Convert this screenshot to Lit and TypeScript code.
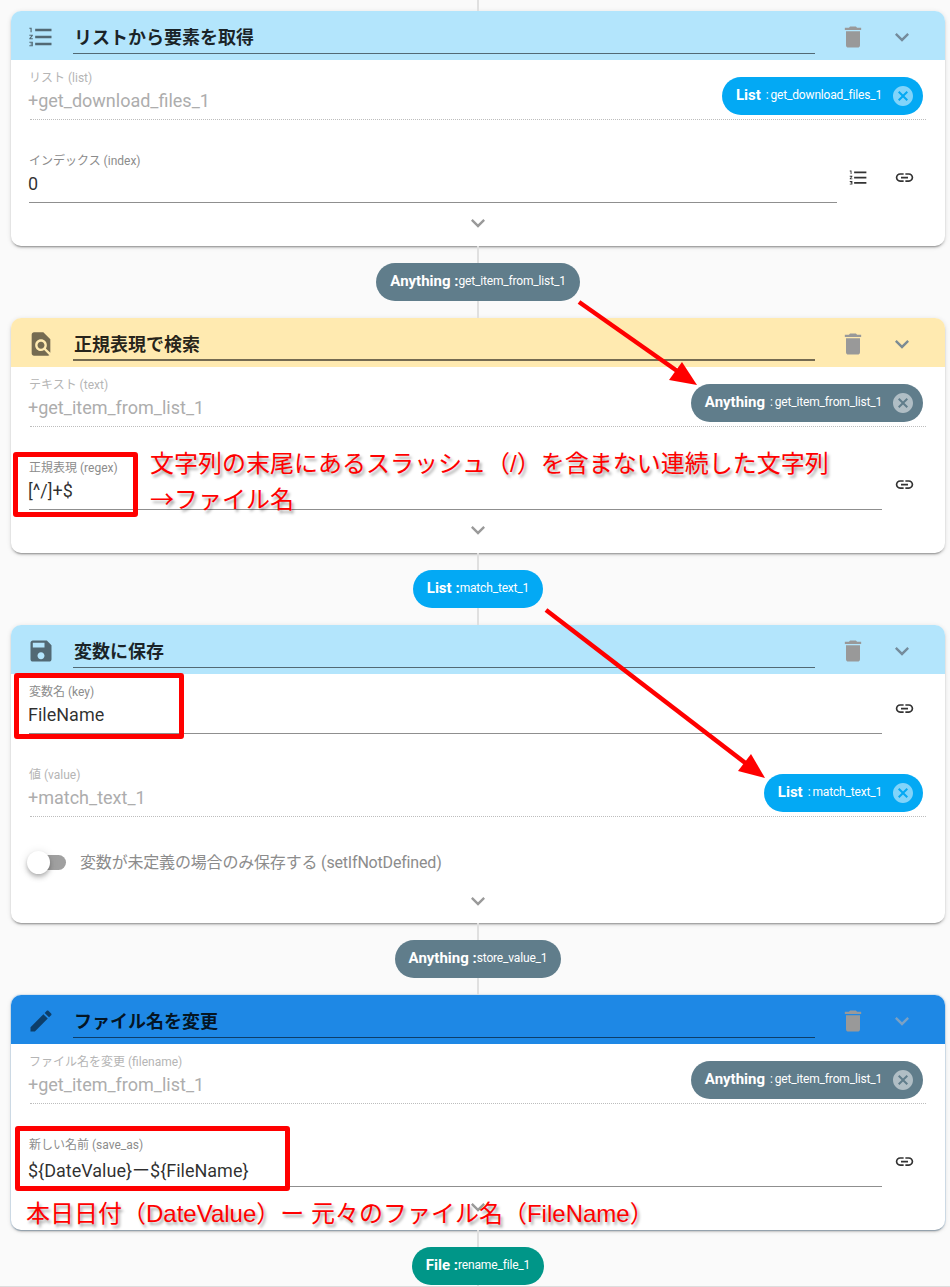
import { LitElement, html, css, svg } from "lit";
import { customElement } from "lit/decorators.js";
import { classMap } from "lit/directives/class-map.js";

const P = {
  list: "M2 17h2v.5H3v1h1v.5H2v1h3v-4H2v1zm1-9h1V4H2v1h1v3zm-1 3h1.8L2 13.1v.9h3v-1H3.2L5 10.9V10H2v1zm5-6v2h14V5H7zm0 14h14v-2H7v2zm0-6h14v-2H7v2z",
  find: "M20 19.59V8l-6-6H6c-1.1 0-1.99.9-1.99 2L4 20c0 1.1.89 2 1.99 2H18c.45 0 .85-.15 1.19-.4l-4.43-4.43c-.8.52-1.74.83-2.76.83-2.76 0-5-2.24-5-5s2.24-5 5-5 5 2.24 5 5c0 1.02-.31 1.96-.83 2.75L20 19.59zM9 13c0 1.66 1.34 3 3 3s3-1.34 3-3-1.34-3-3-3-3 1.34-3 3z",
  save: "M17 3H5c-1.11 0-2 .9-2 2v14c0 1.1.89 2 2 2h14c1.1 0 2-.9 2-2V7l-4-4zm-5 16c-1.66 0-3-1.34-3-3s1.34-3 3-3 3 1.34 3 3-1.34 3-3 3zm3-10H5V5h10v4z",
  edit: "M3 17.25V21h3.75L17.81 9.94l-3.75-3.75L3 17.25zM20.71 7.04c.39-.39.39-1.02 0-1.41l-2.34-2.34c-.39-.39-1.02-.39-1.41 0l-1.83 1.83 3.75 3.75 1.83-1.83z",
  del: "M6 19c0 1.1.9 2 2 2h8c1.1 0 2-.9 2-2V7H6v12zM19 4h-3.5l-1-1h-5l-1 1H5v2h14V4z",
  more: "M16.59 8.59L12 13.17 7.41 8.59 6 10l6 6 6-6z",
  link: "M3.9 12c0-1.71 1.39-3.1 3.1-3.1h4V7H7c-2.76 0-5 2.24-5 5s2.24 5 5 5h4v-1.9H7c-1.71 0-3.1-1.39-3.1-3.1zM8 13h8v-2H8v2zm9-6h-4v1.9h4c1.71 0 3.1 1.39 3.1 3.1s-1.39 3.1-3.1 3.1h-4V17h4c2.76 0 5-2.24 5-5s-2.24-5-5-5z",
  cancel: "M12 2C6.47 2 2 6.47 2 12s4.47 10 10 10 10-4.47 10-10S17.53 2 12 2zm5 13.59L15.59 17 12 13.41 8.41 17 7 15.59 10.59 12 7 8.41 8.41 7 12 10.59 15.59 7 17 8.41 13.41 12 17 15.59z",
};

const icon = (d: string, cls = "") => html`<svg class="ic ${cls}" viewBox="0 0 24 24"><path d=${d}></path></svg>`;

type Field =
  | { kind: "socket"; label: string; value: string; type: string; name: string; tone: string }
  | { kind: "text"; label: string; value: string; list?: boolean; low?: boolean };

interface Card {
  title: string; icon: string; tone: string; fields: Field[]; toggle?: string;
}

const cards: { card: Card; out: [string, string, string] }[] = [
  {
    card: {
      title: "リストから要素を取得", icon: P.list, tone: "sky",
      fields: [
        { kind: "socket", label: "リスト (list)", value: "+get_download_files_1", type: "List", name: "get_download_files_1", tone: "c-blue" },
        { kind: "text", label: "インデックス (index)", value: "0", list: true },
      ],
    },
    out: ["Anything", "get_item_from_list_1", "c-grey"],
  },
  {
    card: {
      title: "正規表現で検索", icon: P.find, tone: "amber",
      fields: [
        { kind: "socket", label: "テキスト (text)", value: "+get_item_from_list_1", type: "Anything", name: "get_item_from_list_1", tone: "c-grey" },
        { kind: "text", label: "正規表現 (regex)", value: "[^/]+$" },
      ],
    },
    out: ["List", "match_text_1", "c-blue"],
  },
  {
    card: {
      title: "変数に保存", icon: P.save, tone: "sky",
      fields: [
        { kind: "text", label: "変数名 (key)", value: "FileName" },
        { kind: "socket", label: "値 (value)", value: "+match_text_1", type: "List", name: "match_text_1", tone: "c-blue" },
      ],
      toggle: "変数が未定義の場合のみ保存する (setIfNotDefined)",
    },
    out: ["Anything", "store_value_1", "c-grey"],
  },
  {
    card: {
      title: "ファイル名を変更", icon: P.edit, tone: "blue",
      fields: [
        { kind: "socket", label: "ファイル名を変更 (filename)", value: "+get_item_from_list_1", type: "Anything", name: "get_item_from_list_1", tone: "c-grey" },
        { kind: "text", label: "新しい名前 (save_as)", value: "${DateValue}ー${FileName}", low: true },
      ],
    },
    out: ["File", "rename_file_1", "c-teal"],
  },
];

@customElement("app-root")
export class AppRoot extends LitElement {
  static styles = css`
    :host {
      display: block; position: relative; width: 950px; height: 1287px; overflow: hidden;
      background: #fafafa; font-family: Roboto, "Noto Sans CJK JP", sans-serif; color: rgba(0,0,0,.87);
    }
    .flow { display: flex; flex-direction: column; padding: 0 5px 0 11px; }
    .top { height: 11px; }
    .wire { display: flex; justify-content: center; position: relative; }
    .wire::before { content: ""; position: absolute; left: 50%; top: 0; bottom: 0; width: 2px; margin-left: -1px; background: #e0e0e0; }
    .link { padding: 17px 0; }
    .card { background: #fff; border-radius: 10px; overflow: hidden;
      box-shadow: 0 3px 1px -2px rgba(0,0,0,.2), 0 2px 2px 0 rgba(0,0,0,.14), 0 1px 5px 0 rgba(0,0,0,.12); }
    .card.blue { box-shadow: 0 0 0 1px rgba(30,136,229,.12), 0 3px 1px -2px rgba(0,0,0,.2), 0 2px 2px 0 rgba(0,0,0,.14), 0 1px 5px 0 rgba(0,0,0,.12); }
    .head { height: 49px; display: flex; align-items: center; padding-left: 16px; box-sizing: border-box; }
    .sky .head { background: #b3e5fc; }
    .amber .head { background: #ffeab0; }
    .blue .head { background: #1e88e5; }
    .ic { width: 24px; height: 24px; display: block; flex: none; fill: currentColor; }
    .head .ic { width: 28px; height: 28px; margin-top: 2px; }
    .hicon { color: rgba(0,0,0,.54); }
    .title { margin-left: 18px; width: 742px; height: 35px; box-sizing: border-box; margin-top: 2px;
      font-size: 18px; font-weight: 700; line-height: 38px; color: rgba(0,0,0,.85);
      border-bottom: 1px solid rgba(0,0,0,.54); padding-left: 1px; white-space: nowrap; }
    .amber .title { border-bottom-width: 2px; }
    .trash { margin-left: 24px; color: #999; }
    .chev { margin-left: 21px; color: rgba(110,130,145,.9); }
    .blue .chev { color: #7ba1c4; }
    .body { padding: 0 19px 0 18px; display: flex; flex-direction: column; }
    .row { display: flex; height: 60px; }
    .gap { margin-top: 23px; }
    .field { flex: 1; min-width: 0; height: 60px; box-sizing: border-box; padding-top: 11px; position: relative; }
    .field.line { border-bottom: 1px solid #8f8f8f; }
    .field.dots { border-bottom: 1px dotted #bdbdbd; margin-left: 1px; display: flex; justify-content: space-between; padding-right: 3px; }
    .lbl { font-size: 12px; line-height: 14px; color: #8c8c8c; white-space: nowrap; }
    .val { font-size: 18px; line-height: 24px; margin-top: 4px; margin-left: -1px; color: rgba(0,0,0,.82); white-space: nowrap; }
    .val.low { margin-top: 7px; }
    .dots .lbl { color: #b5b5b5; margin-left: -1px; }
    .dots .val { color: #adadad; margin-left: -2px; }
    .btn { width: 44px; height: 60px; display: flex; align-items: center; justify-content: center; padding-top: 8px; box-sizing: border-box; color: #333; }
    .btn .ic { width: 21px; height: 21px; }
    .btn.wide { width: 45px; padding-right: 3px; }
    .chip { display: inline-flex; align-items: center; height: 38px; border-radius: 19px; color: #fff; padding: 0 14px 2px; box-sizing: border-box; position: relative; white-space: nowrap; }
    .chip b { font-size: 15px; font-weight: 700; }
    .chip span { font-size: 12px; letter-spacing: -.17px; }
    .chip .colon { margin: 0 2px 0 5px; }
    .in { margin-top: 6px; padding-right: 8px; align-self: flex-start; }
    .in svg { margin: 2px 0 0 9px; fill: rgba(255,255,255,.5); }
    .c-blue { background: #03a9f4; }
    .c-grey { background: #607d8b; }
    .c-teal { background: #009688; }
    .toggle { display: flex; align-items: center; height: 24px; margin-top: 33px; margin-left: 1px; font-size: 16px; letter-spacing: -.18px; color: #8c8c8c; }
    .toggle-text { margin-bottom: 3px; }
    .track { width: 36px; height: 15px; border-radius: 8px; background: #a0a0a0; position: relative; margin-right: 14px; flex: none; }
    .thumb { position: absolute; left: -3px; top: -4px; width: 23px; height: 23px; border-radius: 50%; background: #fff;
      box-shadow: 0 2px 4px -1px rgba(0,0,0,.2), 0 4px 5px 0 rgba(0,0,0,.14), 0 1px 10px 0 rgba(0,0,0,.12); }
    .fold { display: flex; justify-content: center; height: 43px; padding-top: 6px; box-sizing: border-box; color: #9a9a9a; }
    .fold .ic { width: 28px; height: 28px; }
    .hastoggle .fold { height: 49px; padding-top: 13px; }
    .over { position: absolute; inset: 0; width: 950px; height: 1287px; pointer-events: none; }
    .box { position: absolute; border: 5px solid #f00; border-radius: 3px; box-sizing: border-box; }
    .note { position: absolute; font-family: "Liberation Sans", "Noto Sans CJK JP", sans-serif; font-size: 24px; line-height: 34px; color: #f00; white-space: nowrap;
      text-shadow: 2px 3px 3px rgba(0,0,0,.35); }
    .base { position: absolute; left: 0; right: 0; top: 1286px; height: 1px; background: #ddd; }
    .b1 { left: 13px; top: 452px; width: 125px; height: 65px; }
    .b2 { left: 14px; top: 673px; width: 170px; height: 66px; }
    .b3 { left: 15px; top: 1126px; width: 275px; height: 65px; }
    .n1 { left: 150px; top: 447px; }
    .n2 { left: 150px; top: 481px; font-family: "Noto Sans CJK JP", sans-serif; }
    .n3 { left: 26px; top: 1197px; }
  `;

  private renderField(f: Field, gap: boolean) {
    if (f.kind === "socket") {
      return html`<div class=${classMap({ row: true, gap })}>
        <div class="field dots">
          <div><div class="lbl">${f.label}</div><div class="val">${f.value}</div></div>
          <div class="chip in ${f.tone}"><b>${f.type}</b><span class="colon">:</span><span>${f.name}</span>${icon(P.cancel)}</div>
        </div>
      </div>`;
    }
    return html`<div class=${classMap({ row: true, gap })}>
      <div class="field line"><div class="lbl">${f.label}</div><div class=${classMap({ val: true, low: !!f.low })}>${f.value}</div></div>
      ${f.list ? html`<div class="btn wide">${icon(P.list)}</div>` : ""}
      <div class="btn">${icon(P.link)}</div>
    </div>`;
  }

  private renderCard(c: Card) {
    return html`<section class="card ${c.tone} ${c.toggle ? "hastoggle" : ""}">
      <header class="head">
        <div class="hicon">${icon(c.icon)}</div>
        <div class="title">${c.title}</div>
        <div class="trash">${icon(P.del)}</div>
        <div class="chev">${icon(P.more)}</div>
      </header>
      <div class="body">
        ${c.fields.map((f, i) => this.renderField(f, i > 0))}
        ${c.toggle ? html`<div class="toggle"><div class="track"><div class="thumb"></div></div><span class="toggle-text">${c.toggle}</span></div>` : ""}
        <div class="fold">${icon(P.more)}</div>
      </div>
    </section>`;
  }

  render() {
    return html`
      <div class="flow">
        <div class="wire top"></div>
        ${cards.map(({ card, out }) => html`
          ${this.renderCard(card)}
          <div class="wire link">
            <div class="chip ${out[2]}"><b>${out[0]} :</b><span>${out[1]}</span></div>
          </div>
        `)}
      </div>
      <div class="base"></div>
      <svg class="over" viewBox="0 0 950 1287">
        ${svg`
          <line x1="579" y1="302" x2="680" y2="373" stroke="#f00" stroke-width="4.5"></line>
          <polygon points="697,385 682,362 669,380" fill="#f00"></polygon>
          <line x1="546" y1="610" x2="748" y2="765" stroke="#f00" stroke-width="4.5"></line>
          <polygon points="765,778 751,754 738,771" fill="#f00"></polygon>
        `}
      </svg>
      <div class="box b1"></div>
      <div class="box b2"></div>
      <div class="box b3"></div>
      <div class="note n1">文字列の末尾にあるスラッシュ（/）を含まない連続した文字列</div>
      <div class="note n2">→ファイル名</div>
      <div class="note n3">本日日付（DateValue）ー 元々のファイル名（FileName）</div>
    `;
  }
}
